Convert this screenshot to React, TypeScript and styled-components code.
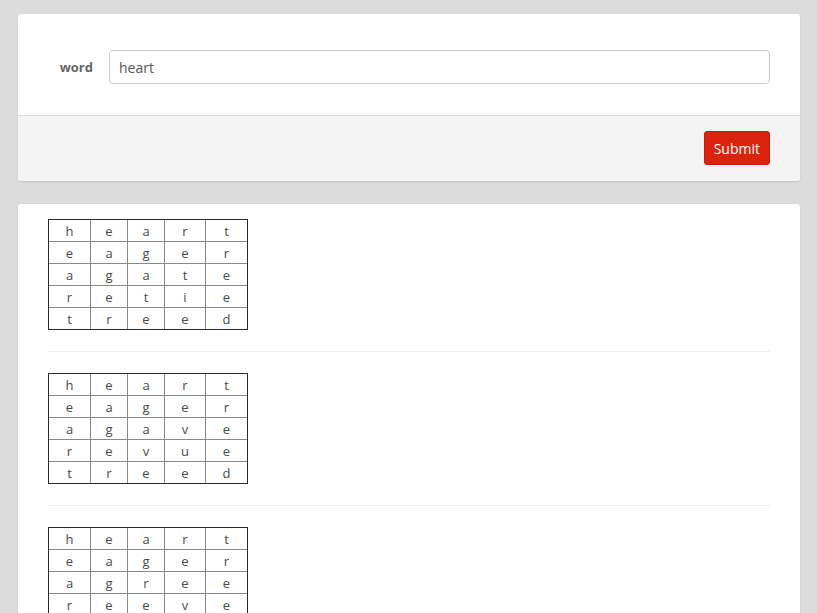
import React from 'react';
import styled, { createGlobalStyle } from 'styled-components';

const GlobalStyle = createGlobalStyle`
  html, body {
    margin: 0;
    padding: 0;
    background: #dcdcdc;
    font-family: "Open Sans", "Noto Sans", sans-serif;
  }
`;

const squares: string[][] = [
  ['heart', 'eager', 'agate', 'retie', 'treed'],
  ['heart', 'eager', 'agave', 'revue', 'treed'],
  ['heart', 'eager', 'agree', 'reeve', 'treed'],
];

function App() {
  return (
    <React.Fragment>
      <GlobalStyle />
      <Page>
        <Card>
          <FormBody>
            <Label htmlFor="word">word</Label>
            <Input id="word" defaultValue="heart" />
          </FormBody>
          <Footer>
            <SubmitButton>Submit</SubmitButton>
          </Footer>
        </Card>

        <Card>
          <Results>
            {squares.map((rows, i) => (
              <React.Fragment key={i}>
                {i > 0 && <Divider />}
                <Square role="table">
                  {rows.map((row, r) =>
                    row.split('').map((ch, c) => (
                      <Cell key={r + '-' + c} role="cell">
                        {ch}
                      </Cell>
                    ))
                  )}
                </Square>
              </React.Fragment>
            ))}
          </Results>
        </Card>
      </Page>
    </React.Fragment>
  );
}

export default App;

const Page = styled.div`
  padding: 14px 17px 30px 18px;
  display: flex;
  flex-direction: column;
  gap: 23px;
`;

const Card = styled.div`
  background: #fff;
  border-radius: 3px;
  box-shadow: 0 1px 2px rgba(0, 0, 0, 0.12);
  overflow: hidden;
`;

const FormBody = styled.div`
  display: grid;
  grid-template-columns: 46px 1fr;
  column-gap: 15px;
  align-items: center;
  padding: 36px 30px 31px 30px;
`;

const Label = styled.label`
  text-align: right;
  font-weight: 700;
  font-size: 13px;
  color: #666;
  padding-right: 1px;
`;

const Input = styled.input`
  height: 34px;
  box-sizing: border-box;
  border: 1px solid #cccccc;
  border-radius: 4px;
  padding: 0 9px;
  font-family: "Open Sans", "Noto Sans", sans-serif;
  font-size: 14px;
  color: #555;
  outline: none;
  width: 100%;
`;

const Footer = styled.div`
  background: #f4f4f4;
  border-top: 1px solid #dddddd;
  padding: 15px 30px 16px 30px;
  display: flex;
  justify-content: flex-end;
`;

const SubmitButton = styled.button`
  height: 34px;
  padding: 0 9px;
  background: #d9230f;
  border: 1px solid #c41f0d;
  border-radius: 3px;
  color: #fff;
  font-family: "Open Sans", "Noto Sans", sans-serif;
  font-size: 14px;
  cursor: pointer;
`;

const Results = styled.div`
  padding: 15px 30px 22px 30px;
  display: flex;
  flex-direction: column;
  gap: 21px;
`;

const Divider = styled.hr`
  margin: 0;
  border: 0;
  border-top: 1px solid #eeeeee;
`;

const Square = styled.div`
  display: grid;
  grid-template-columns: 41px 36px 36px 40px 41px;
  grid-auto-rows: 21px;
  gap: 1px;
  width: max-content;
  background: #8a8a8a;
  border: 1px solid #2a2a2a;
`;

const Cell = styled.div`
  background: #fff;
  display: flex;
  align-items: center;
  justify-content: center;
  font-size: 13px;
  color: #4a4a4a;
`;
